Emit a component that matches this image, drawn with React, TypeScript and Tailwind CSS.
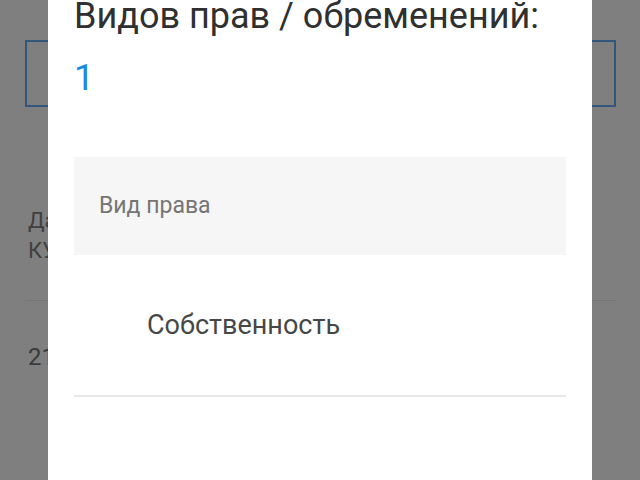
export default function App() {
  return (
    <div
      className="relative w-[640px] h-[480px] overflow-hidden bg-white"
      style={{ fontFamily: "Roboto, 'Noto Sans', sans-serif" }}
    >
      {/* page under the dialog */}
      <div className="flex flex-col pt-[40px] px-[25px] pr-[24px]">
        <div className="h-[67px] border-2 border-[#66aef4]" />
        <div className="mt-[99px] pl-[3px] text-[22px] leading-[30px] text-[#808080]">
          <div>Дата</div>
          <div>КУВИ</div>
        </div>
        <div className="mt-[34px] h-px bg-[#e8e8e8]" />
        <div className="mt-[40px] pl-[3px] text-[24px] leading-[32px] text-[#757575]">21.05</div>
      </div>

      {/* overlay */}
      <div className="absolute inset-0 bg-black/50" />

      {/* dialog */}
      <div className="absolute top-0 bottom-0 left-[48px] w-[544px] bg-white px-[26px]">
        <div className="flex flex-col">
          <div className="mt-[-4px] text-[36px] leading-[40px] text-[#303030] whitespace-nowrap">
            Видов прав / обременений:
          </div>
          <div className="mt-[22px] text-[36px] leading-[40px] text-[#1e88e5]">1</div>

          <div className="mt-[59px] h-[98px] bg-[#f5f6f5] pl-[25px] pt-[35px]">
            <div className="text-[23px] leading-[28px] text-[#757575]">Вид права</div>
          </div>

          <div className="mt-[54px] pl-[73px] text-[27px] leading-[32px] text-[#474747]">
            Собственность
          </div>

          <div className="mt-[54px] h-[2px] bg-[#e8e8e8]" />
        </div>
      </div>
    </div>
  );
}
